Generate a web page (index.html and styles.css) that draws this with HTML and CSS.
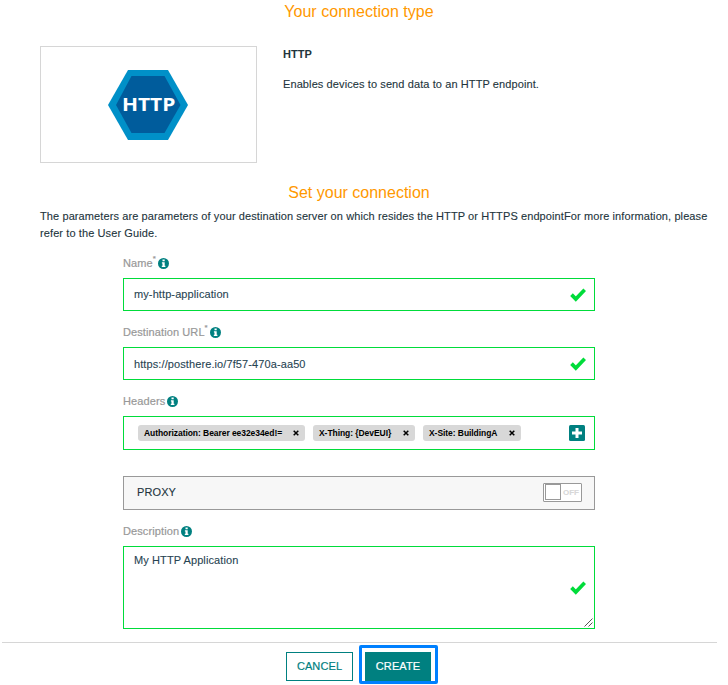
FILE: index.html
```html
<!DOCTYPE html>
<html lang="en">
<head>
<meta charset="utf-8">
<title>Connection</title>
<link rel="stylesheet" href="styles.css">
</head>
<body>
<svg class="defs" aria-hidden="true">
  <symbol id="info" viewBox="0 0 11 11"><circle cx="5.5" cy="5.5" r="5.500" fill="#008080"/><path d="M4.500 1.600h2.200v1.700h-2.200zM3.900 4.200h2.800v3.500h.7v1.300H3.800V7.700h.7V5.400H3.900z" fill="#fff"/></symbol>
  <symbol id="check" viewBox="0 0 16 14"><path d="M1.500 6.600L5.800 11L14.700 1.700" fill="none" stroke="#00dc3a" stroke-width="3.700"/></symbol>
  <symbol id="cross" viewBox="0 0 6 6"><path d="M.7.7L5.300 5.300M5.300.7L.7 5.300" stroke="#000" stroke-width="1.500"/></symbol>
</svg>
<main class="page">
  <h2 class="title type-title">Your connection type</h2>
  <section class="type">
    <div class="logo-card">
      <svg class="logo" viewBox="0 0 80 70">
        <path d="M20 0H60L80 35L60 70H20L0 35Z" fill="#0090c8"/>
        <path d="M23.500 6H56.500L72.500 35L56.500 63H23.500L8 35Z" fill="#005c9c"/>
        <text x="13.900" y="41" textLength="53.500" lengthAdjust="spacingAndGlyphs" class="logo-text">HTTP</text>
      </svg>
    </div>
    <div class="type-info">
      <p class="type-name">HTTP</p>
      <p class="type-desc">Enables devices to send data to an HTTP endpoint.</p>
    </div>
  </section>
  <h2 class="title set-title">Set your connection</h2>
  <p class="intro">The parameters are parameters of your destination server on which resides the HTTP or HTTPS endpointFor more information, please refer to the User Guide.</p>
  <form class="form">
    <div class="label">Name<sup>*</sup><svg class="info"><use href="#info"/></svg></div>
    <div class="field"><span>my-http-application</span><svg class="check"><use href="#check"/></svg></div>
    <div class="label">Destination URL<sup>*</sup><svg class="info"><use href="#info"/></svg></div>
    <div class="field url"><span>https://posthere.io/7f57-470a-aa50</span><svg class="check"><use href="#check"/></svg></div>
    <div class="label">Headers<svg class="info"><use href="#info"/></svg></div>
    <div class="field headers">
      <span class="chip chip-auth"><span>Authorization: Bearer ee32e34ed!=</span><svg><use href="#cross"/></svg></span>
      <span class="chip chip-thing"><span>X-Thing: {DevEUI}</span><svg><use href="#cross"/></svg></span>
      <span class="chip chip-site"><span>X-Site: BuildingA</span><svg><use href="#cross"/></svg></span>
      <svg class="plus" viewBox="0 0 16 16"><rect width="16" height="16" rx="1.500" fill="#008080"/><path d="M8 3V13M3 8H13" stroke="#fff" stroke-width="3"/></svg>
    </div>
    <div class="proxy"><span>PROXY</span><div class="toggle"><i></i><b>OFF</b></div></div>
    <div class="label">Description<svg class="info"><use href="#info"/></svg></div>
    <div class="field area"><span>My HTTP Application</span><svg class="check"><use href="#check"/></svg>
      <svg class="grip" viewBox="0 0 9 9"><path d="M.5 8.500L8.500.5M4.500 8.500L8.500 4.500" stroke="#555" stroke-width="1"/></svg>
    </div>
  </form>
  <footer class="actions">
    <button class="btn cancel">CANCEL</button>
    <div class="focus"><button class="btn create">CREATE</button></div>
  </footer>
</main>
</body>
</html>
```
FILE: styles.css
```css
* { box-sizing: border-box; }
body { margin: 0; background: #fff; color: #22343c; font: 11px/17px "Liberation Sans", Arial, sans-serif; letter-spacing: .1px; -webkit-text-stroke: .1px currentColor; }
p, h2 { margin: 0; }
.defs { position: absolute; width: 0; height: 0; }
.page { width: 718px; height: 685px; overflow: hidden; }
.title { color: #ff9800; font-size: 16px; font-weight: 400; line-height: 20px; letter-spacing: .03px; text-align: center; -webkit-text-stroke: 0; }
.type-title { padding-top: 2px; height: 46px; }
.type { display: flex; gap: 26px; margin-left: 40px; height: 117px; }
.logo-card { width: 217px; height: 117px; border: 1px solid #d6d6d6; display: flex; justify-content: center; padding: 23px 1px 0 0; }
.logo { width: 80px; height: 70px; }
.logo-text { font: 700 18.500px "Open Sans", sans-serif; letter-spacing: 0; fill: #fff; -webkit-text-stroke: 0; }
.type-name { font-weight: 700; letter-spacing: 0; -webkit-text-stroke: 0; }
.type-desc { margin-top: 13px; }
.set-title { margin-top: 20px; letter-spacing: 0; }
.intro { margin: 5px 0 0 40px; width: 676px; height: 34px; }
.form { margin-left: 123px; width: 472px; }
.label { height: 36px; padding-top: 13px; color: #989898; font-weight: 400; display: flex; align-items: flex-start; -webkit-text-stroke: .2px #989898; }
.label sup { font-size: 8px; line-height: 8px; }
.info { width: 11px; height: 11px; margin: 2.500px 0 0 2px; }
.field { position: relative; height: 33px; border: 1px solid #00dc3a; display: flex; align-items: center; justify-content: space-between; padding: 0 8px 0 10px; color: #274452; }
.url span { padding-top: 2px; }
.check { width: 16px; height: 14px; }
.headers { height: 34px; padding: 0 9px 0 14px; justify-content: flex-start; color: #000; }
.chip { height: 16px; border-radius: 3px; background: #d8d8d8; padding: 0 6px; display: flex; align-items: center; justify-content: space-between; margin-right: 8px; font-size: 8.500px; font-weight: 700; line-height: 16px; letter-spacing: -.06px; white-space: nowrap; -webkit-text-stroke: 0; }
.chip svg { width: 6px; height: 6px; }
.chip-auth { width: 167px; }
.chip-thing { width: 102px; }
.chip-site { width: 98px; }
.plus { width: 16px; height: 16px; margin-left: auto; }
.proxy { margin-top: 26px; height: 34px; border: 1px solid #999; background: #f7f7f7; display: flex; align-items: center; justify-content: space-between; padding: 0 12px 2px 13px; }
.toggle { width: 39px; height: 19px; border: 1px solid #999; border-radius: 1px; background: #fff; display: flex; align-items: center; gap: 2px; padding-left: 1px; }
.toggle i { width: 16px; height: 16px; border: 1px solid #999; }
.toggle b { font-size: 8px; color: #d8d8d8; letter-spacing: 0; }
.area { height: 83px; }
.area > span { align-self: flex-start; margin-top: 5px; }
.grip { position: absolute; right: 1px; bottom: 1px; width: 9px; height: 9px; }
.actions { margin: 13px 1px 0 2px; border-top: 1px solid #d6d6d6; display: flex; padding: 2px 0 0 284px; }
.btn { font: 11px/13px "Liberation Sans", Arial, sans-serif; letter-spacing: .1px; padding: 0; height: 29px; border: 1px solid #008080; border-radius: 0; -webkit-text-stroke: .2px currentColor; }
.cancel { width: 67px; margin-top: 7px; background: #fff; color: #008080; }
.focus { width: 79px; height: 39px; border: 3px solid #0080ff; border-radius: 2px; margin-left: 6px; padding: 4px 0 0 3px; }
.create { width: 66px; background: #008080; color: #fff; display: block; }
```
